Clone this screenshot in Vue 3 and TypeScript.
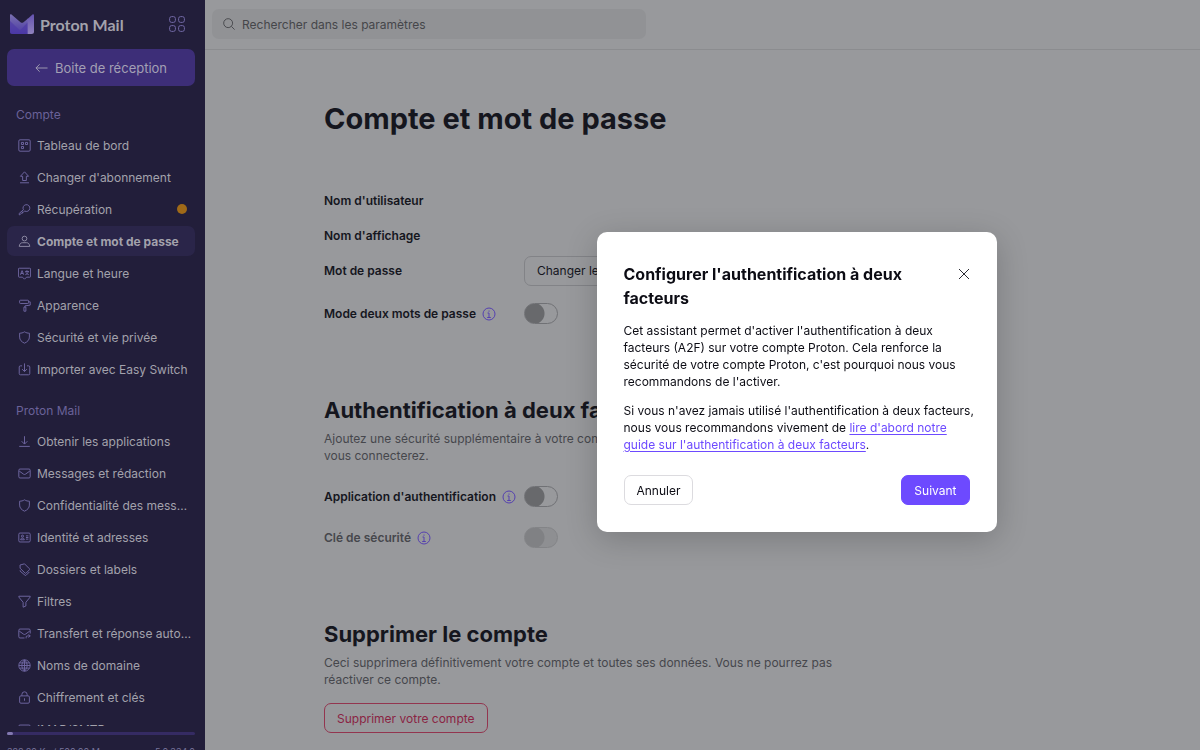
<script setup lang="ts">
import { ref } from 'vue'

interface NavItem {
  label: string
  icon: string
  active?: boolean
  alert?: boolean
}

interface NavGroup {
  title: string
  items: NavItem[]
}

const icons: Record<string, string> = {
  dashboard: 'M2.500 1h11A1.500 1.500 0 0 1 15 2.500v11a1.500 1.500 0 0 1-1.500 1.500h-11A1.500 1.500 0 0 1 1 13.500v-11A1.500 1.500 0 0 1 2.500 1zM4.200 4.200h2.600v2.600H4.200zM9.200 4.200h2.600v2.600H9.200zM4.200 9.200h2.600v2.600H4.200z',
  upgrade: 'M8 1 3 6.500H5.700v5.200h4.600V6.500H13zM2.500 14.500h11',
  key: 'M6.700 8.300a4.200 4.200 0 1 1 1.600 1.600L7 11H5.500v1.500H4L2.500 14.500h-1V12.800zM11 5h.1',
  user: 'M8 1.500a2.900 2.900 0 1 1 0 5.800 2.900 2.900 0 0 1 0-5.800zM5.500 9.500h5c2.300 0 3.500 1.500 4 4.500h-13c.5-3 1.700-4.500 4-4.500z',
  language: 'M1.500 1.500h13a1 1 0 0 1 1 1v9a1 1 0 0 1-1 1h-4L8 15l-2.500-2.500h-4a1 1 0 0 1-1-1v-9a1 1 0 0 1 1-1zM3 9.500l2-5 2 5M3.700 8h2.600M8.800 5.500h4.700M11 4v1.500M12.700 5.500c-.5 2-1.700 3.500-3.700 4M9.800 6.500c.6 1.500 1.700 2.500 3.500 3',
  roller: 'M3 1.500h9a1 1 0 0 1 1 1v2a1 1 0 0 1-1 1H3a1 1 0 0 1-1-1v-2a1 1 0 0 1 1-1zM13 3.500h2v4L8.500 8.500V10M7.300 10h2.400v5H7.300z',
  shield: 'M8 1c2 1.300 4 1.700 6 1.700v4.800c0 3.500-2.300 5.800-6 7.500-3.700-1.700-6-4-6-7.500V2.700C4 2.700 6 2.300 8 1z',
  import: 'M5 3.500H3A1.500 1.500 0 0 0 1.500 5v8A1.500 1.500 0 0 0 3 14.500h10a1.500 1.500 0 0 0 1.500-1.500V5A1.500 1.500 0 0 0 13 3.500h-2M8 .5v9.800M5 7.500l3 3 3-3',
  download: 'M8 1.500v9.500M4.500 7.700 8 11.200l3.500-3.500M1.500 14h13',
  mail: 'M2.500 2.500h11A1.500 1.500 0 0 1 15 4v8a1.500 1.500 0 0 1-1.500 1.500h-11A1.500 1.500 0 0 1 1 12V4a1.500 1.500 0 0 1 1.500-1.500zM1.500 5l5.300 3.800c.8.500 1.600.5 2.400 0L14.500 5',
  card: 'M2.500 2.500h11A1.500 1.500 0 0 1 15 4v8a1.500 1.500 0 0 1-1.500 1.500h-11A1.500 1.500 0 0 1 1 12V4a1.500 1.500 0 0 1 1.500-1.500zM5.500 5a1.300 1.300 0 1 1 0 2.600 1.300 1.300 0 0 1 0-2.600zM3.200 10.800c0-1.500 1-2 2.300-2s2.300.5 2.300 2zM9.800 6h3M9.800 8h3M9.800 10h3',
  tag: 'M2.500 2.500 8 1l6 6a1 1 0 0 1 0 1.400l-4 4a1 1 0 0 1-1.400 0l-6-6zM5.500 4.800h.1M2.600 9v1l6 5a1 1 0 0 0 1.400 0l4-4',
  filter: 'M1 1.500h14v1L9.700 9v4.500L6.300 15V9L1 2.500z',
  forward: 'M8 13.500H2.500A1.500 1.500 0 0 1 1 12V4a1.500 1.500 0 0 1 1.500-1.500h11A1.500 1.500 0 0 1 15 4v4M1.500 5l5.300 3.800c.8.500 1.600.5 2.400 0L14.500 5M10 14v-1.500a1.500 1.500 0 0 1 1.500-1.500H15M13 9l2 2-2 2',
  globe: 'M8 1a7 7 0 1 1 0 14A7 7 0 0 1 8 1zM8 1v14M1 8h14M2 4.800h12M2 11.200h12M8 1C3.700 5 3.700 11 8 15M8 1c4.300 4 4.300 10 0 14',
  lock: 'M3.500 6h9A1.500 1.500 0 0 1 14 7.500v6a1.500 1.500 0 0 1-1.500 1.500h-9A1.500 1.500 0 0 1 2 13.500v-6A1.500 1.500 0 0 1 3.500 6zM4.800 6V4.200a3.200 3.200 0 0 1 6.400 0V6M8 9v3',
}

const groups: NavGroup[] = [
  {
    title: 'Compte',
    items: [
      { label: 'Tableau de bord', icon: 'dashboard' },
      { label: "Changer d'abonnement", icon: 'upgrade' },
      { label: 'Récupération', icon: 'key', alert: true },
      { label: 'Compte et mot de passe', icon: 'user', active: true },
      { label: 'Langue et heure', icon: 'language' },
      { label: 'Apparence', icon: 'roller' },
      { label: 'Sécurité et vie privée', icon: 'shield' },
      { label: 'Importer avec Easy Switch', icon: 'import' },
    ],
  },
  {
    title: 'Proton Mail',
    items: [
      { label: 'Obtenir les applications', icon: 'download' },
      { label: 'Messages et rédaction', icon: 'mail' },
      { label: 'Confidentialité des messages', icon: 'shield' },
      { label: 'Identité et adresses', icon: 'card' },
      { label: 'Dossiers et labels', icon: 'tag' },
      { label: 'Filtres', icon: 'filter' },
      { label: 'Transfert et réponse automatique', icon: 'forward' },
      { label: 'Noms de domaine', icon: 'globe' },
      { label: 'Chiffrement et clés', icon: 'lock' },
      { label: 'IMAP/SMTP', icon: 'mail' },
    ],
  },
]

const query = ref('')
const twoPasswords = ref(false)
const authenticator = ref(false)
const securityKey = ref(false)
const dialogOpen = ref(true)
</script>

<template>
  <div class="app">
    <aside class="sidebar">
      <div class="brand">
        <svg class="logo" viewBox="0 0 24 20" aria-hidden="true">
          <defs>
            <linearGradient id="flap" x1="0" y1="0" x2="0" y2="1">
              <stop offset="0" stop-color="#7a70b0" />
              <stop offset="1" stop-color="#4b3aa4" />
            </linearGradient>
            <linearGradient id="side" x1="0" y1="0" x2="0" y2="1">
              <stop offset="0" stop-color="#6553b0" />
              <stop offset="1" stop-color="#8f82bd" />
            </linearGradient>
          </defs>
          <path d="M0 1.200C0 0 1 .2 1.500.6l9 7.700c.9.700 2.100.7 3 0l4.500-3.800V20H2.500A2.500 2.500 0 0 1 0 17.500z" fill="url(#flap)" />
          <path d="M17.500 4.900 22.500.6c.6-.5 1.500-.3 1.500.6v16.300a2.500 2.500 0 0 1-2.500 2.500h-4z" fill="url(#side)" />
          <path d="M0 7l10 9.500 7.500-8V20H2.500A2.500 2.500 0 0 1 0 17.500z" fill="#4b37a6" opacity=".6" />
        </svg>
        <span class="wordmark">Proton Mail</span>
        <button class="apps" type="button" aria-label="Applications Proton">
          <svg viewBox="0 0 16 16" aria-hidden="true">
            <rect x=".6" y=".6" width="5.800" height="5.800" rx="2" />
            <rect x="9.600" y=".6" width="5.800" height="5.800" rx="2" />
            <rect x=".6" y="9.600" width="5.800" height="5.800" rx="2" />
            <rect x="9.600" y="9.600" width="5.800" height="5.800" rx="2" />
          </svg>
        </button>
      </div>

      <a class="inbox" href="#">
        <svg viewBox="0 0 14 10" aria-hidden="true"><path d="M13.500 5H1M5 1 1 5l4 4" /></svg>
        Boite de réception
      </a>

      <nav class="nav" aria-label="Paramètres">
        <section v-for="group in groups" :key="group.title" class="group">
          <h2 class="group-title">{{ group.title }}</h2>
          <ul class="list">
            <li v-for="item in group.items" :key="item.label">
              <a class="item" :class="{ active: item.active }" href="#" :aria-current="item.active ? 'page' : undefined">
                <svg class="item-icon" viewBox="0 0 16 16" aria-hidden="true"><path :d="icons[item.icon]" /></svg>
                <span class="item-label">{{ item.label }}</span>
                <span v-if="item.alert" class="dot"></span>
              </a>
            </li>
          </ul>
        </section>
      </nav>

      <footer class="storage">
        <div class="track"><div class="fill"></div></div>
        <div class="storage-text"><span>328.89 Ko / 500.00 Mo</span><span>5.0.334.0</span></div>
      </footer>
    </aside>

    <div class="page">
      <header class="topbar">
        <label class="search">
          <svg viewBox="0 0 14 14" aria-hidden="true"><circle cx="6" cy="6" r="5.200" /><path d="m9.800 9.800 3.700 3.700" /></svg>
          <input v-model="query" type="search" placeholder="Rechercher dans les paramètres" aria-label="Rechercher dans les paramètres" />
        </label>
      </header>

      <main class="content">
        <h1>Compte et mot de passe</h1>

        <section class="account">
          <div class="row"><span class="label">Nom d'utilisateur</span></div>
          <div class="row"><span class="label">Nom d'affichage</span></div>
          <div class="row with-button">
            <span class="label">Mot de passe</span>
            <button class="button" type="button">Changer le mot de passe</button>
          </div>
          <div class="row tall">
            <label class="label" for="two-passwords">Mode deux mots de passe
              <svg class="info" viewBox="0 0 14 14" aria-hidden="true"><circle cx="7" cy="7" r="6" /><path d="M5.500 6H7v4.500M5.200 10.500h3.600M7 3.500v1.200" /></svg>
            </label>
            <input id="two-passwords" v-model="twoPasswords" class="toggle" type="checkbox" role="switch" />
          </div>
        </section>

        <section class="block">
          <h2>Authentification à deux facteurs</h2>
          <p class="hint">Ajoutez une sécurité supplémentaire à votre compte Proton à chaque fois que vous vous&nbsp;connecterez.</p>
          <div class="auth">
            <div class="row tall">
              <label class="label" for="authenticator">Application d'authentification
                <svg class="info" viewBox="0 0 14 14" aria-hidden="true"><circle cx="7" cy="7" r="6" /><path d="M5.500 6H7v4.500M5.200 10.500h3.600M7 3.500v1.200" /></svg>
              </label>
              <input id="authenticator" v-model="authenticator" class="toggle" type="checkbox" role="switch" />
            </div>
            <div class="row tall">
              <label class="label muted" for="security-key">Clé de sécurité
                <svg class="info" viewBox="0 0 14 14" aria-hidden="true"><circle cx="7" cy="7" r="6" /><path d="M5.500 6H7v4.500M5.200 10.500h3.600M7 3.500v1.200" /></svg>
              </label>
              <input id="security-key" v-model="securityKey" class="toggle" type="checkbox" role="switch" disabled />
            </div>
          </div>
        </section>

        <section class="block">
          <h2>Supprimer le compte</h2>
          <p class="hint">Ceci supprimera définitivement votre compte et toutes ses données. Vous ne pourrez pas réactiver ce compte.</p>
          <button class="button danger" type="button">Supprimer votre compte</button>
        </section>
      </main>
    </div>

    <div v-if="dialogOpen" class="overlay">
      <div class="dialog" role="dialog" aria-modal="true" aria-labelledby="dialog-title">
        <div class="dialog-head">
          <h2 id="dialog-title">Configurer l'authentification à deux facteurs</h2>
          <button class="close" type="button" aria-label="Fermer" @click="dialogOpen = false">
            <svg viewBox="0 0 12 12" aria-hidden="true"><path d="m1 1 10 10M11 1 1 11" /></svg>
          </button>
        </div>
        <p>Cet assistant permet d'activer l'authentification à deux facteurs (A2F) sur votre compte Proton. Cela renforce la sécurité de votre compte Proton, c'est pourquoi nous vous recommandons de l'activer.</p>
        <p>Si vous n'avez jamais utilisé l'authentification à deux facteurs, nous vous recommandons vivement de <a href="#">lire d'abord notre guide sur l'authentification à deux facteurs</a>.</p>
        <div class="actions">
          <button class="action" type="button" @click="dialogOpen = false">Annuler</button>
          <button class="action primary" type="button">Suivant</button>
        </div>
      </div>
    </div>
  </div>
</template>

<style>
body {
  margin: 0;
  background: #98999c;
}
</style>

<style scoped>
* {
  box-sizing: border-box;
}

.app {
  display: flex;
  height: 100vh;
  overflow: hidden;
  font-family: Inter, "Liberation Sans", sans-serif;
  font-size: 12px;
  color: #15161e;
  background: #98999c;
}

svg {
  fill: none;
  stroke: currentColor;
  flex: none;
}

button,
input {
  font: inherit;
  color: inherit;
}

h1,
h2,
p,
ul {
  margin: 0;
  padding: 0;
}

.sidebar {
  display: flex;
  flex-direction: column;
  flex: none;
  width: 205px;
  background: #221e3a;
  color: #a3a2ac;
}

.brand {
  display: flex;
  align-items: center;
  height: 48px;
  flex: none;
  margin-bottom: 1px;
  padding: 0 20px 0 10px;
}

.logo {
  width: 24px;
  height: 20px;
  stroke: none;
}

.wordmark {
  margin-left: 6px;
  font-family: Lato, Inter, sans-serif;
  font-size: 16px;
  font-weight: 700;
  white-space: nowrap;
}

.apps {
  display: flex;
  margin-left: auto;
  padding: 0;
  border: 0;
  background: none;
  color: #7168a5;
}

.apps svg {
  width: 16px;
  height: 16px;
}

.inbox {
  display: flex;
  align-items: center;
  justify-content: center;
  gap: 7px;
  height: 37px;
  flex: none;
  margin: 0 10px 0 7px;
  border-radius: 7px;
  background: #3d2e78;
  color: #a3a0b4;
  font-size: 13px;
  text-decoration: none;
}

.inbox svg {
  width: 13px;
  height: 10px;
}

.nav {
  flex: 1;
  min-height: 0;
  overflow: hidden;
  padding: 16px 10px 0 7px;
}

.group {
  margin-bottom: 13px;
}

.group-title {
  height: 27px;
  padding-left: 9px;
  color: #6a6299;
  font-size: 12px;
  font-weight: 400;
  line-height: 26px;
}

.list {
  list-style: none;
}

.list li {
  height: 32px;
  padding: 1px 0;
}

.item {
  display: flex;
  align-items: center;
  gap: 6px;
  height: 30px;
  padding: 0 3px 0 11px;
  border-radius: 7px;
  color: inherit;
  text-decoration: none;
}

.item.active {
  background: #2a2549;
  font-weight: 700;
}

.item-icon {
  width: 13px;
  height: 13px;
  color: #6e66a0;
  stroke-width: 1.2;
}

.active .item-icon {
  color: #8d8aa3;
}

.item-label {
  flex: 1;
  overflow: hidden;
  text-overflow: ellipsis;
  white-space: nowrap;
}

.dot {
  width: 10px;
  height: 10px;
  margin-right: 5px;
  border-radius: 50%;
  background: #a06a18;
}

.storage {
  flex: none;
  height: 24px;
  padding: 6px 10px 0 7px;
  overflow: hidden;
  font-size: 9px;
  color: #77749a;
}

.track {
  height: 3px;
  border-radius: 2px;
  background: #352b63;
}

.fill {
  width: 6px;
  height: 3px;
  border-radius: 2px;
  background: #8379b0;
}

.storage-text {
  display: flex;
  justify-content: space-between;
  margin-top: 11px;
}

.page {
  flex: 1;
  min-width: 0;
}

.topbar {
  height: 50px;
  padding: 9px 7px;
  border-bottom: 1px solid #8b8c8f;
}

.search {
  display: flex;
  align-items: center;
  gap: 7px;
  max-width: 434px;
  height: 30px;
  padding: 0 11px;
  border-radius: 7px;
  background: #919295;
  color: #3f4045;
}

.search svg {
  width: 12px;
  height: 12px;
}

.search input {
  flex: 1;
  min-width: 0;
  padding: 0;
  border: 0;
  outline: 0;
  background: none;
}

.search input::placeholder {
  color: #45464a;
  opacity: 1;
}

.content {
  max-width: 757px;
  margin: 0 auto;
  padding-top: 49px;
}

h1 {
  font-size: 29px;
  line-height: 40px;
}

.account {
  margin-top: 44px;
}

.row {
  display: flex;
  align-items: center;
  height: 35px;
}

.row.with-button {
  margin-bottom: 5px;
}

.row.tall {
  height: 41px;
}

.label {
  display: flex;
  align-items: center;
  gap: 6px;
  width: 200px;
  font-weight: 600;
  white-space: nowrap;
}

.label.muted {
  color: #46474c;
}

.info {
  width: 14px;
  height: 14px;
  color: #5540b0;
}

.button {
  height: 30px;
  padding: 0 12px;
  border: 1px solid #828387;
  border-radius: 7px;
  background: none;
}

.button.danger {
  margin-top: 15px;
  border-color: #93354f;
  color: #8a2443;
}

.toggle {
  appearance: none;
  width: 34px;
  height: 21px;
  margin: 0;
  border: 1px solid #707175;
  border-radius: 11px;
  background: radial-gradient(circle at 9px 50%, #68696c 10px, transparent 11px);
}

.toggle:disabled {
  border-color: #838487;
  background: radial-gradient(circle at 9px 50%, #808184 10px, #8e8f92 11px);
}

.block {
  margin-top: 60px;
}

.block h2 {
  font-size: 22px;
  line-height: 32px;
}

.hint {
  max-width: 510px;
  margin-top: 4px;
  color: #46474c;
  line-height: 17px;
}

.auth {
  margin-top: 12px;
}

.overlay {
  position: fixed;
  inset: 0;
  display: flex;
  align-items: center;
  justify-content: center;
  padding: 14px 0 0 393px;
}

.dialog {
  width: 400px;
  padding: 30px 27px 27px;
  border-radius: 10px;
  background: #fff;
  color: #0c0c14;
  box-shadow: 0 7px 32px rgba(0, 0, 0, 0.2);
}

.dialog-head {
  display: flex;
  align-items: flex-start;
  justify-content: space-between;
  gap: 32px;
}

.dialog-head h2 {
  font-size: 16px;
  line-height: 24px;
}

.close {
  display: flex;
  padding: 6px 0;
  border: 0;
  background: none;
  color: #2b2b33;
}

.close svg {
  width: 12px;
  height: 12px;
}

.dialog p {
  margin: 12px -8px 0 0;
  line-height: 17px;
}

.dialog p a {
  color: #6d4aff;
  text-underline-offset: 2px;
}

.actions {
  display: flex;
  justify-content: space-between;
  margin-top: 22px;
}

.action {
  height: 30px;
  padding: 0 12px;
  border: 1px solid #dcdbdf;
  border-radius: 7px;
  background: #fff;
}

.action.primary {
  border-color: #6d4aff;
  background: #6d4aff;
  color: #fff;
}
</style>
